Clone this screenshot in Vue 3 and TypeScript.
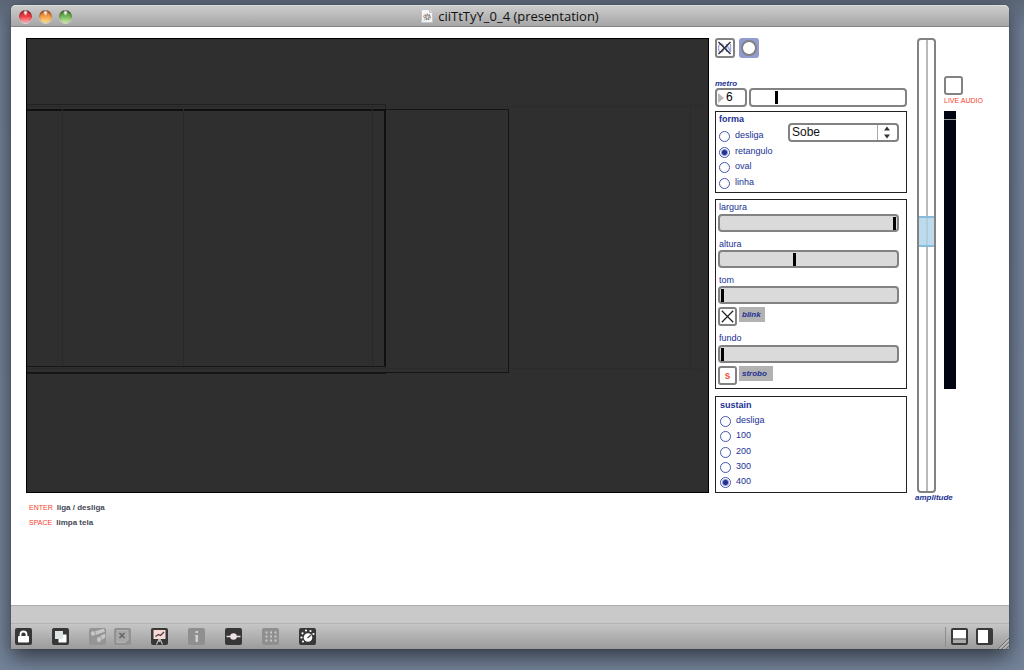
<script setup lang="ts">
import { ref } from 'vue'

const forms = ['desliga', 'retangulo', 'oval', 'linha']
const sustains = ['desliga', '100', '200', '300', '400']

const form = ref('retangulo')
const sustain = ref('400')
const metro = ref('6')
const direction = ref('Sobe')
const speed = ref(153)
const largura = ref(1000)
const altura = ref(416)
const tom = ref(0)
const fundo = ref(0)
const amplitude = ref(581)
const power = ref(true)
const blink = ref(true)
const liveAudio = ref(false)
</script>

<template>
  <main class="desktop">
    <section class="window">
      <header class="titlebar">
        <div class="lights">
          <button class="light red" aria-label="Close"></button>
          <button class="light amber" aria-label="Minimize"></button>
          <button class="light green" aria-label="Zoom"></button>
        </div>
        <h1 class="title">
          <svg width="12" height="14" viewBox="0 0 12 14" aria-hidden="true">
            <path d="M.5 .5h8l3 3v10H.5z" fill="#f6f6f6" stroke="#c4c4c4" />
            <path d="M8.500 .5v3h3" fill="#ddd" stroke="#c4c4c4" />
            <circle cx="6.500" cy="8" r="2.600" fill="none" stroke="#858585" stroke-width="1.500" stroke-dasharray="1.500 .7" />
            <circle cx="6.500" cy="8" r="1.700" fill="#ddd" stroke="#8b8b8b" />
            <path d="M2 8.500l1.500-3" stroke="#eda06a" />
            <path d="M2.500 11l1.500 0" stroke="#7fc5cc" />
          </svg>
          <span>ciiTtTyY_0_4 (presentation)</span>
        </h1>
      </header>

      <div class="patch">
        <svg class="canvas" viewBox="0 0 681 453" preserveAspectRatio="none" role="img" aria-label="Output">
          <g shape-rendering="crispEdges">
            <path d="M358 67H663V329H358M663 66H681M663 330H681" fill="none" stroke="#2b2b2b" />
            <path d="M35.500 71V329M156.500 71V329M345.500 66V329" stroke="#292929" />
            <path d="M0 65.500H358V329" fill="none" stroke="#202020" />
            <path d="M0 67.500H358M0 329.500H358" stroke="#292929" />
            <path d="M0 71H358" stroke="#101010" stroke-width="2" />
            <path d="M358 70.500H481.500V333.500H0" fill="none" stroke="#141414" />
            <path d="M358 71V328" stroke="#101010" stroke-width="2" />
            <path d="M0 327.500H359M0 334.500H359" stroke="#181818" />
            <path d="M35.500 70V72M156.500 70V72M345.500 70V72" stroke="#2d2d2d" />
          </g>
        </svg>

        <div class="controls">
          <div class="switches">
            <label class="check">
              <input v-model="power" type="checkbox" aria-label="ON" />
              <svg viewBox="0 0 20 20" aria-hidden="true">
                <ellipse cx="6" cy="10" rx="2.500" ry="4" fill="none" stroke="#98a3e2" stroke-width="1.300" />
                <path d="M11.500 14V6l4 8V6" fill="none" stroke="#98a3e2" stroke-width="1.300" />
                <path v-if="power" d="M3.500 4l12 12M15.500 4l-12 12" stroke="#333" stroke-width="1.500" />
              </svg>
            </label>
            <button class="bang" aria-label="Bang"><i></i></button>
          </div>

          <label class="tag metro-tag" for="metro">metro</label>
          <div class="metro">
            <div class="number">
              <svg width="6" height="10" viewBox="0 0 6 10" aria-hidden="true"><path d="M0 0l6 5-6 5z" fill="#b9b9b9" /></svg>
              <input id="metro" v-model="metro" type="text" />
            </div>
            <input v-model="speed" class="slider plain" type="range" min="0" max="1000" aria-label="metro" />
          </div>

          <section class="panel forma">
            <div>
              <h2>forma</h2>
              <div class="options">
                <label v-for="f in forms" :key="f"><input v-model="form" type="radio" name="forma" :value="f" /><span>{{ f }}</span></label>
              </div>
            </div>
            <div class="menu">
              <select v-model="direction" aria-label="forma">
                <option>Sobe</option>
                <option>Desce</option>
              </select>
              <svg width="20" height="15" viewBox="0 0 20 15" aria-hidden="true">
                <path d="M.5 0v15" stroke="#aaa" />
                <path d="M7 5.500l3-4 3 4zM7 9.500l3 4 3-4z" fill="#333" />
              </svg>
            </div>
          </section>

          <section class="panel sliders">
            <label for="largura">largura</label>
            <input id="largura" v-model="largura" class="slider" type="range" min="0" max="1000" />
            <label for="altura" class="next">altura</label>
            <input id="altura" v-model="altura" class="slider" type="range" min="0" max="1000" />
            <label for="tom" class="next">tom</label>
            <input id="tom" v-model="tom" class="slider" type="range" min="0" max="1000" />
            <div class="flag">
              <label class="check">
                <input id="blink" v-model="blink" type="checkbox" />
                <svg viewBox="0 0 20 20" aria-hidden="true"><path v-if="blink" d="M4 4l12 12M16 4l-12 12" stroke="#222" stroke-width="1.300" /></svg>
              </label>
              <label class="tag chip" for="blink">blink</label>
            </div>
            <label for="fundo" class="after">fundo</label>
            <input id="fundo" v-model="fundo" class="slider" type="range" min="0" max="1000" />
            <div class="flag">
              <button class="strobe" aria-label="strobo">s</button>
              <span class="tag chip wide">strobo</span>
            </div>
          </section>

          <section class="panel sustain">
            <h2>sustain</h2>
            <div class="options">
              <label v-for="s in sustains" :key="s"><input v-model="sustain" type="radio" name="sustain" :value="s" /><span>{{ s }}</span></label>
            </div>
          </section>
        </div>

        <div class="gain">
          <input id="amplitude" v-model="amplitude" type="range" min="0" max="1000" />
        </div>

        <div class="audio">
          <label class="check"><input id="live" v-model="liveAudio" type="checkbox" /></label>
          <label class="live" for="live">LIVE AUDIO</label>
          <div class="meter"></div>
        </div>

        <div class="help">
          <p><span>ENTER</span><b>liga / desliga</b></p>
          <p><span>SPACE</span><b>limpa tela</b></p>
        </div>
        <label class="tag gain-tag" for="amplitude">amplitude</label>
      </div>

      <div class="status"></div>

      <footer class="toolbar">
        <button aria-label="Lock">
          <svg viewBox="0 0 17 17"><rect width="17" height="17" rx="2" fill="#373737" /><rect x="3" y="8" width="11" height="6.500" rx="1" fill="#fff" /><path d="M5.500 8.500V6.500a3 3 0 0 1 6 0v2" fill="none" stroke="#fff" stroke-width="1.800" /></svg>
        </button>
        <button aria-label="Presentation">
          <svg viewBox="0 0 17 17"><rect width="17" height="17" rx="2" fill="#373737" /><rect x="6.500" y="6.500" width="8" height="8" fill="#fff" /><rect x="3" y="3" width="8" height="8" fill="#dce4e4" /></svg>
        </button>
        <div class="pair">
          <button aria-label="Patch cords" disabled>
            <svg viewBox="0 0 17 17"><rect width="17" height="17" rx="2" fill="#959595" /><g stroke="#8c8c8c" stroke-width=".7" fill="#c6c6c6"><path d="M4 3.500L15 0l1.500 4L5 8z" /><ellipse cx="4" cy="5.500" rx="2.500" ry="2.800" /><path d="M9 9l7-4 1 4-6 5z" /><ellipse cx="10" cy="11.500" rx="2.500" ry="3" /></g></svg>
          </button>
          <button aria-label="Delete" disabled>
            <svg viewBox="0 0 17 17"><rect width="17" height="17" rx="2" fill="#929292" /><path d="M3 2.500h11v9l-3 3H3z" fill="#a6a6a6" stroke="#b4b4b4" /><path d="M5.500 5l5 5M10.500 5l-5 5" stroke="#666" stroke-width="1.600" /></svg>
          </button>
        </div>
        <button aria-label="Chart">
          <svg viewBox="0 0 17 17"><rect width="17" height="17" rx="2" fill="#373737" /><rect x="2.500" y="2" width="12" height="9" fill="#f8d9d5" /><path d="M4.500 8.500l3-2 2 1 3.500-3.500" fill="none" stroke="#4b3a3a" stroke-width="1.200" /><path d="M8 11l-2.500 5.500M9 11l2.500 5.500M8.500 11v3" stroke="#bbb" stroke-width="1.200" /></svg>
        </button>
        <button aria-label="Info" disabled>
          <svg viewBox="0 0 17 17"><rect width="17" height="17" rx="2" fill="#8f8f8f" /><rect x="7.500" y="3" width="2.500" height="2" fill="#d0d0d0" /><path d="M7 7h3v7H7.500V8H7z" fill="#d0d0d0" /></svg>
        </button>
        <button aria-label="Transport">
          <svg viewBox="0 0 17 17"><rect width="17" height="17" rx="2" fill="#373737" /><path d="M1.500 8.500h14" stroke="#ddd" stroke-width="1.500" /><circle cx="8.500" cy="8.500" r="3.300" fill="#efe2e4" /></svg>
        </button>
        <button aria-label="Grid" disabled>
          <svg viewBox="0 0 17 17"><rect width="17" height="17" rx="2" fill="#8f8f8f" /><path d="M3.500 4.500h11M3.500 8.500h11M3.500 12.500h11" stroke="#c8c8c8" stroke-width="2" stroke-dasharray="2 2.500" /></svg>
        </button>
        <button aria-label="Dial">
          <svg viewBox="0 0 17 17"><rect width="17" height="17" rx="2" fill="#373737" /><circle cx="9" cy="9.500" r="4.300" fill="#fff" /><path d="M8.500 10l3.500-3" stroke="#444" stroke-width="1.300" /><g fill="#fff"><circle cx="4" cy="13.500" r="1.100" /><circle cx="2.500" cy="9.500" r="1.100" /><circle cx="3.500" cy="5.300" r="1.100" /><circle cx="7" cy="2.500" r="1.100" /><circle cx="11.500" cy="3" r="1.100" /><circle cx="14.500" cy="6" r="1.100" /></g></svg>
        </button>
        <div class="views">
          <button aria-label="Bottom pane">
            <svg viewBox="0 0 17 17"><rect x="1" y="1" width="15" height="15" rx="1" fill="#fff" stroke="#393939" stroke-width="2" /><rect x="2" y="11.500" width="13" height="3.500" fill="#aaa" /><path d="M2 11h13" stroke="#444" stroke-width="1.200" /></svg>
          </button>
          <button aria-label="Side pane">
            <svg viewBox="0 0 17 17"><rect x="1" y="1" width="15" height="15" rx="1" fill="#fff" stroke="#393939" stroke-width="2" /><rect x="12" y="1" width="4" height="15" fill="#393939" /></svg>
          </button>
        </div>
        <svg class="grip" viewBox="0 0 12 12" aria-hidden="true"><path d="M1 12L12 1M5 12l7-7M9 12l3-3" stroke="#6d6d6d" /><path d="M2.500 12L12 2.500M6.500 12L12 6.500" stroke="#ccc" /></svg>
      </footer>
    </section>
  </main>
</template>

<style>
body {
  margin: 0;
}
</style>

<style scoped>
* {
  box-sizing: border-box;
}
.desktop {
  min-height: 100vh;
  display: flex;
  padding: 5px 15px 21px 11px;
  background: linear-gradient(#5c6778, #728097 30px, #75849b);
  font-family: "Liberation Sans", Arial, sans-serif;
  overflow: hidden;
}
.window {
  flex: 1;
  display: flex;
  flex-direction: column;
  border-radius: 5px 5px 0 0;
  background: #fff;
  box-shadow: 0 8px 22px rgba(0, 0, 0, 0.6), 0 0 1px rgba(0, 0, 0, 0.6);
}
button {
  appearance: none;
  border: 0;
  padding: 0;
  background: none;
  display: block;
}
input {
  margin: 0;
}
svg {
  display: block;
}
.titlebar {
  display: grid;
  grid-template-columns: 1fr auto 1fr;
  align-items: center;
  height: 22px;
  border-radius: 5px 5px 0 0;
  border-top: 1px solid #dcdcdc;
  border-bottom: 1px solid #858585;
  background: linear-gradient(#cccccc, #a6a6a6);
}
.lights {
  display: flex;
  gap: 7px;
  padding-left: 8px;
}
.light {
  width: 13px;
  height: 13px;
  border-radius: 50%;
  box-shadow: inset 0 1px 2px rgba(60, 20, 20, 0.7), 0 1px 0 rgba(255, 255, 255, 0.5);
}
.red {
  background: radial-gradient(ellipse at 50% 15%, #fff 0 8%, transparent 25%), linear-gradient(#b32a30, #ee3f45 50%, #ffb5b5);
}
.amber {
  background: radial-gradient(ellipse at 50% 15%, #fff 0 8%, transparent 25%), linear-gradient(#c5601f, #f3a04a 50%, #ffe58e);
}
.green {
  background: radial-gradient(ellipse at 50% 15%, #fff 0 8%, transparent 25%), linear-gradient(#3f8233, #74b65a 50%, #cdf0a4);
}
.title {
  display: flex;
  align-items: center;
  gap: 5px;
  margin: 0;
  font: 13px/20px "Open Sans", "Noto Sans", sans-serif;
  color: #111;
}
.patch {
  flex: 1;
  display: grid;
  grid-template-columns: minmax(0, 1fr) 192px 23px 67px;
  grid-template-rows: auto 1fr;
  column-gap: 6px;
  padding: 11px 0 0 15px;
}
.canvas {
  width: 100%;
  height: 0;
  min-height: 100%;
  border: 1px solid #000;
  background: #2f2f2f;
}
.controls {
  display: flex;
  flex-direction: column;
}
.switches {
  display: flex;
  gap: 4px;
}
.check {
  position: relative;
  display: block;
  width: 19px;
  height: 19px;
}
.switches .check,
.bang {
  width: 20px;
  height: 20px;
}
.check input {
  appearance: none;
  display: block;
  width: 100%;
  height: 100%;
  border: 2px solid #828282;
  border-radius: 3px;
  background: #fff;
}
.check svg {
  position: absolute;
  inset: 0;
  pointer-events: none;
}
.bang {
  display: grid;
  place-items: center;
  border-radius: 3px;
  background: #949bce;
}
.bang i {
  width: 16px;
  height: 16px;
  border: 2px solid #828282;
  border-radius: 50%;
  background: #fff;
}
.tag {
  font-size: 8px;
  line-height: 9px;
  font-weight: bold;
  font-style: italic;
  color: #223193;
}
.metro-tag {
  margin-top: 21px;
}
.metro {
  display: grid;
  grid-template-columns: 32px 1fr;
  gap: 2px;
  height: 19px;
}
.number {
  display: flex;
  align-items: center;
  gap: 2px;
  padding-left: 1px;
  border: 2px solid #828282;
  border-radius: 4px;
}
.number svg {
  flex: none;
}
.number input {
  width: 18px;
  height: 15px;
  padding: 0;
  border: 0;
  background: none;
  font: 12px/15px "Liberation Sans", Arial, sans-serif;
}
.slider {
  appearance: none;
  display: block;
  width: 100%;
  height: 18px;
  padding: 0 1px;
  border: 2px solid #828282;
  border-radius: 4px;
  background: #dadada;
}
.slider.plain {
  height: 19px;
  background: #fff;
}
.slider::-webkit-slider-thumb {
  appearance: none;
  width: 3px;
  height: 13px;
  background: #000;
}
.panel {
  border: 1px solid #222;
  color: #223193;
}
.panel h2 {
  margin: 0;
  font-size: 9px;
  line-height: 14px;
}
.forma {
  display: grid;
  grid-template-columns: 69px 1fr;
  height: 82px;
  margin-top: 4px;
  padding: 0 7px 0 3px;
}
.options {
  display: grid;
  grid-auto-rows: 15px;
  align-content: space-between;
}
.options label {
  display: flex;
  gap: 5px;
  font-size: 9px;
  line-height: 13px;
}
.options input {
  appearance: none;
  width: 11px;
  height: 11px;
  margin-top: 2px;
  border: 1px solid #4556ae;
  border-radius: 50%;
}
.options input:checked {
  background: radial-gradient(circle, #223193 0 2px, transparent 4px);
}
.forma .options {
  height: 62px;
  margin-top: 3px;
}
.menu {
  position: relative;
  height: 19px;
  margin-top: 11px;
}
.menu select {
  appearance: none;
  display: block;
  width: 100%;
  height: 19px;
  padding: 0 0 0 2px;
  border: 2px solid #828282;
  border-radius: 4px;
  background: #fff;
  font: 12px/15px "Liberation Sans", Arial, sans-serif;
  color: #111;
}
.menu svg {
  position: absolute;
  top: 2px;
  right: 2px;
  pointer-events: none;
}
.sliders {
  display: flex;
  flex-direction: column;
  height: 190px;
  margin-top: 6px;
  padding: 0 7px 0 2px;
}
.sliders > label {
  padding-left: 1px;
  font-size: 9px;
  line-height: 14px;
}
.sliders .next {
  margin-top: 6px;
  line-height: 12px;
}
.sliders .after {
  margin-top: 5px;
}
.flag {
  display: flex;
  gap: 2px;
  margin-top: 3px;
}
.chip {
  width: 26px;
  height: 15px;
  padding-left: 3px;
  line-height: 15px;
  background: #b2b2b2;
}
.chip.wide {
  width: 34px;
}
.strobe {
  width: 19px;
  height: 19px;
  border: 2px solid #828282;
  border-radius: 3px;
  font: bold 10px/14px "Liberation Sans", Arial, sans-serif;
  color: #f2563c;
}
.sustain {
  height: 97px;
  margin-top: 7px;
  padding: 1px 4px;
}
.sustain .options {
  height: 76px;
  margin-top: 2px;
}
.gain {
  display: flex;
  padding-left: 4px;
}
.gain input {
  appearance: none;
  writing-mode: vertical-lr;
  direction: rtl;
  width: 19px;
  border: 2px solid #828282;
  border-radius: 4px;
  background: linear-gradient(90deg, transparent 7px, #bababa 7px 9px, transparent 9px);
}
.gain input::-webkit-slider-thumb {
  appearance: none;
  width: 15px;
  height: 31px;
  border: 1px solid #88bbdc;
  border-width: 2px 0;
  background: rgba(174, 209, 233, 0.8);
}
.audio {
  padding: 38px 0 0 2px;
}
.live {
  display: block;
  font-size: 7px;
  line-height: 12px;
  color: #f9402a;
}
.meter {
  width: 12px;
  height: 278px;
  margin-top: 4px;
  background: linear-gradient(#000511 8px, #9a9a9a 8px 9px, #000511 9px);
}
.help {
  padding: 7px 0 0 3px;
}
.help p {
  display: flex;
  gap: 4px;
  margin: 0;
  line-height: 15px;
}
.help span {
  font-size: 7px;
  color: #f9402a;
}
.help b {
  font-size: 8px;
  color: #454a55;
}
.gain-tag {
  grid-column: 3 / -1;
  padding-left: 2px;
}
.status {
  height: 19px;
  border-top: 1px solid #adadad;
  border-bottom: 1px solid #b3b3b3;
  background: #c9c9c9;
}
.toolbar {
  display: flex;
  align-items: center;
  gap: 20px;
  height: 25px;
  padding-left: 4px;
  background: linear-gradient(#c6c6c6, #9b9b9b);
}
.toolbar button {
  width: 17px;
  height: 17px;
}
.pair {
  display: flex;
  gap: 8px;
}
.views {
  display: flex;
  align-items: center;
  gap: 8px;
  height: 20px;
  margin-left: auto;
  padding-left: 5px;
  border-left: 1px solid #8c8c8c;
}
.grip {
  width: 12px;
  height: 12px;
  margin-left: -16px;
  align-self: flex-end;
}
</style>
